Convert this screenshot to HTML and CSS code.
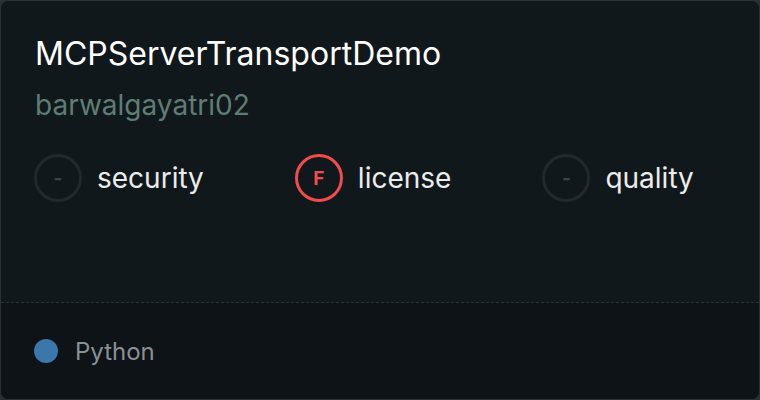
FILE: index.html
```html
<!DOCTYPE html>
<html>
<head>
<meta charset="utf-8">
<link rel="stylesheet" href="styles.css">
</head>
<body>
<div class="card">
  <div class="main">
    <div class="title">MCPServerTransportDemo</div>
    <div class="owner">barwalgayatri02</div>
    <div class="scores">
      <div class="score">
        <div class="ring">-</div>
        <span class="label">security</span>
      </div>
      <div class="score">
        <div class="ring fail">F</div>
        <span class="label">license</span>
      </div>
      <div class="score">
        <div class="ring">-</div>
        <span class="label">quality</span>
      </div>
    </div>
  </div>
  <div class="footer">
    <span class="dot"></span>
    <span class="lang">Python</span>
  </div>
</div>
</body>
</html>
```
FILE: styles.css
```css
html, body {
  margin: 0;
  padding: 0;
  background: #2a3033;
}
body {
  width: 760px;
  height: 400px;
  font-family: Inter, "Noto Sans", sans-serif;
}
.card {
  box-sizing: border-box;
  width: 760px;
  height: 400px;
  border: 1px solid #2a3033;
  border-radius: 8px;
  background: #11181b;
  overflow: hidden;
  display: flex;
  flex-direction: column;
}
.main {
  flex: 0 0 302px;
  box-sizing: border-box;
  padding: 34px 33px 0 33px;
  border-bottom: 1px dashed #2a3034;
}
.title {
  color: #ffffff;
  font-size: 32px;
  line-height: 38px;
  padding-left: 1px;
}
.owner {
  color: #5f7d75;
  font-size: 28px;
  line-height: 34px;
  margin-top: 15px;
  padding-left: 1px;
}
.scores {
  display: flex;
  gap: 91px;
  margin-top: 32px;
}
.score {
  display: flex;
  align-items: center;
  gap: 15px;
}
.ring {
  box-sizing: border-box;
  width: 48px;
  height: 48px;
  border-radius: 50%;
  border: 3px solid #22292c;
  color: #3c4448;
  display: flex;
  align-items: center;
  justify-content: center;
  font-size: 19px;
  font-weight: 700;
}
.ring.fail {
  border-color: #f24b4b;
  color: #f24b4b;
}
.label {
  color: #ececec;
  font-size: 28px;
}
.footer {
  flex: 1;
  background: #0d1316;
  display: flex;
  align-items: center;
  padding: 0 33px;
  gap: 17px;
}
.dot {
  width: 24px;
  height: 24px;
  border-radius: 50%;
  background: #3b77aa;
}
.lang {
  color: #8b9094;
  font-size: 24px;
}
```
